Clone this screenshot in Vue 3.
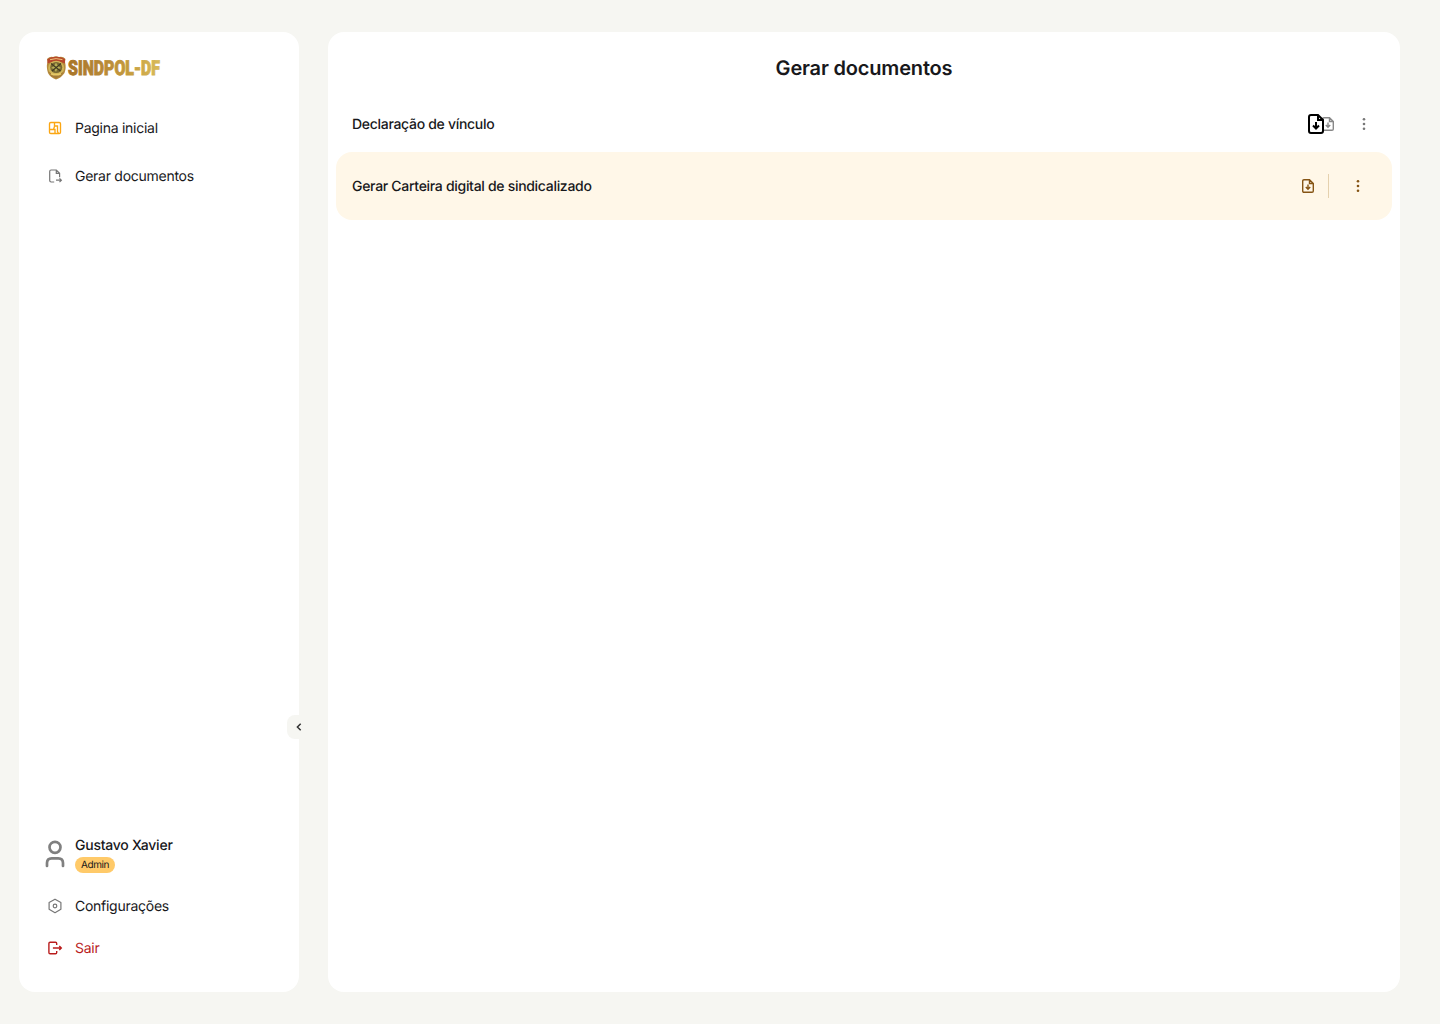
<script setup>
const documents = [
  { title: 'Declaração de vínculo', active: false },
  { title: 'Gerar Carteira digital de sindicalizado', active: true },
]
</script>

<template>
  <div class="page">
    <aside class="sidebar">
      <svg class="logo" width="116" height="26" viewBox="0 0 116 26">
        <defs>
          <linearGradient id="gold" x1="0" x2="1">
            <stop offset="0" stop-color="#a87528" />
            <stop offset="0.4" stop-color="#b98a38" />
            <stop offset="0.65" stop-color="#c49a3c" />
            <stop offset="1" stop-color="#d9bb5c" />
          </linearGradient>
        </defs>
        <path d="M2 4Q5 1 8 2Q11 .5 14 2Q18 1 20.500 4L20 7Q21.500 13 19.500 18Q16 23 11 24.500Q5 22 3 18Q1 12 2.500 7Z" fill="#b58a3c" />
        <path d="M2.500 4Q11 -.5 20 4V8.500Q11 4.500 2.500 8.500Z" fill="#b8472b" />
        <path d="M5 4.700Q11 2.500 17.500 4.700" fill="none" stroke="#ecc477" stroke-width="1" />
        <ellipse cx="11.200" cy="13" rx="8" ry="7.300" fill="#d0b558" />
        <ellipse cx="11.200" cy="12.500" rx="6" ry="5.500" fill="#776832" />
        <path d="M11 7.500L13 11L16 13L12 14.500L11 17L9 14L6 13L9 11Z" fill="#b7ae55" />
        <path d="M6 8.500L15.500 16M16 8.500L7 16" stroke="#403a20" stroke-width="1.100" />
        <path d="M4 17Q11 22 18.500 17L16 21L11 23.500L6 21Z" fill="#a37b38" />
        <path d="M6 18.700Q11 21 16 18.700" fill="none" stroke="#e6ca68" stroke-width="1.500" />
        <text x="23" y="20.300" textLength="92" lengthAdjust="spacingAndGlyphs" fill="url(#gold)" stroke="url(#gold)" stroke-width=".9">SINDPOL-DF</text>
      </svg>

      <nav class="menu">
        <a class="item">
          <svg class="icon home" viewBox="0 0 16 16" stroke="#fba613">
            <rect x="2.500" y="2.500" width="11" height="11" rx="1.300" />
            <path d="M7.500 2.500V6.500L6.500 9.500M2.500 9.500H8V13.500M7.500 6H10.500V11.500L11.500 13.500" />
          </svg>
          <span>Pagina inicial</span>
        </a>
        <a class="item">
          <svg class="icon" viewBox="0 0 16 16" stroke="#777">
            <path d="M7.200 14H4.100Q2.700 14 2.700 12.600V3.400Q2.700 2 4.100 2H9.300L12.600 5.300V9.300M9.300 2V5.300H12.600M9 12.200H14.300M12.500 10.300L14.400 12.200L12.500 14.100" />
          </svg>
          <span>Gerar documentos</span>
        </a>
      </nav>

      <div class="bottom">
        <div class="user">
          <svg class="avatar" width="20" height="28" viewBox="0 0 20 28">
            <circle cx="10" cy="7.300" r="5.500" />
            <path d="M2 26V23Q2 18.300 6.700 18.300H13.300Q18 18.300 18 23V26" stroke-linecap="round" />
          </svg>
          <div class="who">
            <span class="name">Gustavo Xavier</span>
            <span class="badge">Admin</span>
          </div>
        </div>
        <a class="item settings">
          <svg class="icon" viewBox="0 0 16 16" stroke="#777">
            <path d="M8 1.200L13.900 4.500V11.300L8 14.700L2.100 11.300V4.500Z" stroke-linejoin="round" />
            <circle cx="8" cy="8" r="1.800" />
          </svg>
          <span>Configurações</span>
        </a>
        <a class="item exit">
          <svg class="icon" viewBox="0 0 16 16" stroke="#b91c1c">
            <path d="M9.700 5V3.500Q9.700 2.300 8.500 2.300H3.100Q1.900 2.300 1.900 3.500V12.500Q1.900 13.700 3.100 13.700H8.500Q9.700 13.700 9.700 12.500V11M5.900 8H14M12.300 6L14.300 8L12.300 10" stroke-width="1.400" />
          </svg>
          <span>Sair</span>
        </a>
      </div>

      <button class="collapse" aria-label="Recolher">
        <svg width="24" height="24" viewBox="0 0 24 24"><path d="M13.700 8.700L10.400 12L13.700 15.300" /></svg>
      </button>
    </aside>

    <main class="content">
      <h1>Gerar documentos</h1>
      <div v-for="doc in documents" :key="doc.title" class="row" :class="{ active: doc.active }">
        <span class="title">{{ doc.title }}</span>
        <div class="actions">
          <svg v-if="!doc.active" class="file-large" width="16" height="20" viewBox="0 0 16 20">
            <path d="M3 1H10L15 6V17Q15 19 13 19H3Q1 19 1 17V3Q1 1 3 1ZM10 1V6H15" />
            <path d="M8 8V14M5 11.500L8 14.500L11 11.500" />
          </svg>
          <svg class="file" width="12" height="14" viewBox="0 0 12 14">
            <path d="M2 .7H7.500L11.300 4.500V12Q11.300 13.300 10 13.300H2Q.7 13.300 .7 12V2Q.7 .7 2 .7ZM7.500 .7V4.500H11.300" />
            <path d="M6 5.500V10M3.800 8L6 10.200L8.200 8" />
          </svg>
          <i v-if="doc.active" class="divider"></i>
          <svg class="dots" width="4" height="14" viewBox="0 0 4 14">
            <circle cx="2" cy="2.300" r="1.300" /><circle cx="2" cy="7" r="1.300" /><circle cx="2" cy="11.700" r="1.300" />
          </svg>
        </div>
      </div>
    </main>
  </div>
</template>

<style>
body { margin: 0; background: #f6f6f2; }
</style>

<style scoped>
.page {
  box-sizing: border-box;
  display: flex;
  gap: 29px;
  width: 1440px;
  height: 1024px;
  padding: 32px 40px 32px 19px;
  background: #f6f6f2;
  color: #18181b;
  font: 14px/20px Inter, sans-serif;
  letter-spacing: -.27px;
  text-rendering: geometricPrecision;
}
svg { display: block; fill: none; flex: none; }
.sidebar {
  position: relative;
  box-sizing: border-box;
  display: flex;
  flex-direction: column;
  width: 280px;
  padding: 23px 26px 34px;
  border-radius: 16px;
  background: #fff;
}
.logo { overflow: visible; }
.logo text { font: 900 20.500px/24px Roboto, sans-serif; letter-spacing: 0; }
.menu { display: flex; flex-direction: column; gap: 28px; margin-top: 37px; }
.item { display: flex; align-items: center; gap: 12px; height: 20px; padding-left: 2px; }
.item span { padding-top: 2px; }
.icon { width: 16px; height: 16px; stroke-width: 1.200; }
.icon.home { stroke-width: 1.350; }
.bottom { margin-top: auto; }
.user { display: flex; align-items: center; gap: 10px; }
.avatar { stroke: #808080; stroke-width: 2.700; }
.who { display: flex; flex-direction: column; align-items: flex-start; gap: 1px; }
.name { padding-top: 1px; font-weight: 500; letter-spacing: -.24px; }
.badge {
  box-sizing: border-box;
  width: 40px;
  height: 16px;
  border-radius: 8px;
  background: #ffca69;
  font-size: 10px;
  line-height: 17px;
  letter-spacing: -.4px;
  text-align: center;
}
.settings { margin-top: 23px; }
.exit { margin-top: 22px; color: #b91c1c; }
.collapse {
  position: absolute;
  left: 268px;
  top: 683px;
  width: 24px;
  height: 24px;
  padding: 0;
  border: 0;
  border-radius: 8px;
  background: #f6f6f2;
}
.collapse svg { stroke: #333; stroke-width: 1.500; }
.content {
  box-sizing: border-box;
  flex: 1;
  padding: 20px 8px;
  border-radius: 16px;
  background: #fff;
}
h1 { margin: 0 0 12px; font-size: 20px; line-height: 32px; font-weight: 600; text-align: center; letter-spacing: -.18px; }
.row {
  box-sizing: border-box;
  display: flex;
  align-items: center;
  justify-content: space-between;
  height: 56px;
  padding: 0 26px 0 16px;
  border-radius: 16px;
}
.row.active { height: 68px; padding-right: 32px; background: #fff7e8; }
.title { padding-top: 2px; font-weight: 500; letter-spacing: -.3px; }
.actions { display: flex; align-items: center; }
.file { margin-right: 28px; stroke: #888; stroke-width: 1.400; }
.file-large { position: relative; margin-right: -2px; stroke: #000; stroke-width: 2; }
.dots { fill: #777; }
.active .file { margin-right: 14px; stroke: #855414; }
.active .dots { fill: #855414; }
.divider { width: 1px; height: 24px; margin-right: 27px; background: #e5d1ae; }
</style>
